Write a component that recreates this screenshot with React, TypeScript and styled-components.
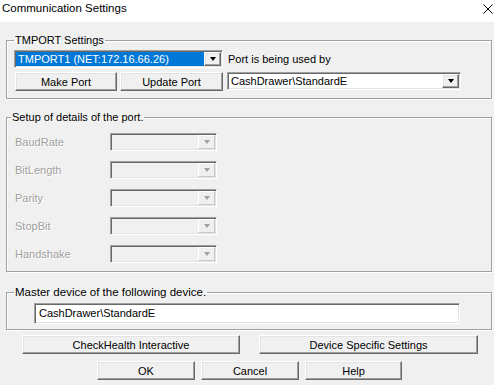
import styled, { createGlobalStyle } from 'styled-components'

const GlobalStyle = createGlobalStyle`
  * { box-sizing: border-box; }
  body {
    margin: 0;
    background: #f0f0f0;
    font-family: "Liberation Sans", Arial, sans-serif;
    color: #000;
  }
`

const detailRows = ['BaudRate', 'BitLength', 'Parity', 'StopBit', 'Handshake']

const App = () => {
    return (
        <Window>
            <GlobalStyle />
            <TitleBar>
                <Title>Communication Settings</Title>
                <svg width="10" height="10" viewBox="0 0 10 10">
                    <path d="M0.5 0.5 L9.5 9.5 M9.5 0.5 L0.5 9.5" stroke="#000" strokeWidth="1" />
                </svg>
            </TitleBar>

            <Body>
                <GroupBox>
                    <Legend $indent={7}>TMPORT Settings</Legend>
                    <PortGrid>
                        <Combo $width={209} style={{ gridColumn: '1 / 3' }}>
                            <ComboField $selected>TMPORT1 (NET:172.16.66.26)</ComboField>
                            <DropButton />
                        </Combo>
                        <UsedLabel>Port is being used by</UsedLabel>
                        <Button>Make Port</Button>
                        <Button>Update Port</Button>
                        <Combo $width={234}>
                            <ComboField>CashDrawer\StandardE</ComboField>
                            <DropButton />
                        </Combo>
                    </PortGrid>
                </GroupBox>

                <GroupBox $gap={11}>
                    <Legend $indent={4}>Setup of details of the port.</Legend>
                    <DetailGrid>
                        {detailRows.map((name) => (
                            <DetailRow key={name}>
                                <DisabledLabel>{name}</DisabledLabel>
                                <Combo $width={107} $disabled>
                                    <ComboField />
                                    <DropButton $disabled />
                                </Combo>
                            </DetailRow>
                        ))}
                    </DetailGrid>
                </GroupBox>

                <GroupBox $gap={13}>
                    <Legend $indent={7} $big>Master device of the following device.</Legend>
                    <MasterBody>
                        <TextBox>CashDrawer\StandardE</TextBox>
                    </MasterBody>
                </GroupBox>

                <ButtonRow $top={5} $left={16} $gap={19}>
                    <Button $width={218}>CheckHealth Interactive</Button>
                    <Button $width={219}>Device Specific Settings</Button>
                </ButtonRow>
                <ButtonRow $top={7} $left={91} $gap={6}>
                    <Button $width={98}>OK</Button>
                    <Button $width={98}>Cancel</Button>
                    <Button $width={97}>Help</Button>
                </ButtonRow>
            </Body>
        </Window>
    )
}

export default App

const Window = styled.div`
width: 494px;
height: 385px;
background: #f0f0f0;
overflow: hidden;
`

const TitleBar = styled.div`
height: 22px;
background: #fff;
display: flex;
align-items: flex-start;
justify-content: space-between;
padding: 1px 1px 0 2px;

svg {
  margin-top: 3px;
}
`

const Title = styled.div`
font-size: 11.5px;
line-height: 14px;
`

const Body = styled.div`
display: flex;
flex-direction: column;
padding: 11px 2px 0 6px;
`

const GroupBox = styled.fieldset<{ $gap?: number }>`
margin: ${p => p.$gap || 0}px 0 0 0;
padding: 0;
min-width: 0;
border: 1px solid #a0a0a0;
box-shadow: inset 1px 1px 0 #fff, 1px 1px 0 #fff;
`

const Legend = styled.legend<{ $indent: number; $big?: boolean }>`
margin-left: ${p => p.$indent}px;
padding: 0 1px;
font-size: ${p => (p.$big ? '11.5px' : '11px')};
line-height: 14px;
`

const PortGrid = styled.div`
display: grid;
grid-template-columns: 103px 103px 234px;
grid-template-rows: 18px 19px;
column-gap: 3px;
row-gap: 4px;
padding: 3px 0 7px 7px;

& > :nth-child(3) {
  margin-left: 1px;
}
& > :last-child {
  margin-left: 1px;
}
`

const UsedLabel = styled.div`
font-size: 11px;
display: flex;
align-items: center;
padding-left: 2px;
`

const sunken = `
border: 1px solid;
border-color: #a0a0a0 #fff #fff #a0a0a0;
box-shadow: inset 1px 1px 0 #696969, inset -1px -1px 0 #e3e3e3;
`

const raised = `
border: 1px solid;
border-color: #fff #696969 #696969 #fff;
box-shadow: inset -1px -1px 0 #a0a0a0, inset 1px 1px 0 #e3e3e3;
`

const Combo = styled.div<{ $width: number; $disabled?: boolean }>`
width: ${p => p.$width}px;
height: 18px;
display: flex;
padding: 1px;
background: ${p => (p.$disabled ? '#f0f0f0' : '#fff')};
${sunken}
`

const ComboField = styled.div<{ $selected?: boolean }>`
flex: 1;
display: flex;
align-items: center;
padding: 0 2px;
font-size: 11px;
white-space: nowrap;
overflow: hidden;
background: ${p => (p.$selected ? '#0078d7' : 'transparent')};
color: ${p => (p.$selected ? '#fff' : '#000')};
`

const DropButton = styled.div<{ $disabled?: boolean }>`
width: 17px;
display: flex;
align-items: center;
justify-content: center;
background: #f0f0f0;
${p => (p.$disabled
        ? 'border: 1px solid; border-color: #fff #c8c8c8 #c8c8c8 #fff;'
        : raised)}

&::after {
  content: '';
  border-left: 3.5px solid transparent;
  border-right: 3.5px solid transparent;
  border-top: 4px solid ${p => (p.$disabled ? '#a0a0a0' : '#000')};
}
`

const DetailGrid = styled.div`
display: grid;
row-gap: 10px;
padding: 9px 0 8px 8px;
`

const DetailRow = styled.div`
display: grid;
grid-template-columns: 95px 107px;
align-items: center;
`

const DisabledLabel = styled.div`
font-size: 11px;
color: #a0a0a0;
text-shadow: 1px 1px 0 #fff;
`

const MasterBody = styled.div`
padding: 4px 0 5px 27px;
`

const TextBox = styled.div`
width: 426px;
height: 21px;
background: #fff;
padding: 2px 4px;
font-size: 11px;
line-height: 14px;
${sunken}
`

const ButtonRow = styled.div<{ $top: number; $left: number; $gap: number }>`
display: flex;
margin-top: ${p => p.$top}px;
padding-left: ${p => p.$left}px;
gap: ${p => p.$gap}px;
`

const Button = styled.div<{ $width?: number }>`
${p => (p.$width ? `width: ${p.$width}px;` : '')}
height: 19px;
display: flex;
align-items: center;
justify-content: center;
font-size: 11px;
background: #f0f0f0;
${raised}
`
